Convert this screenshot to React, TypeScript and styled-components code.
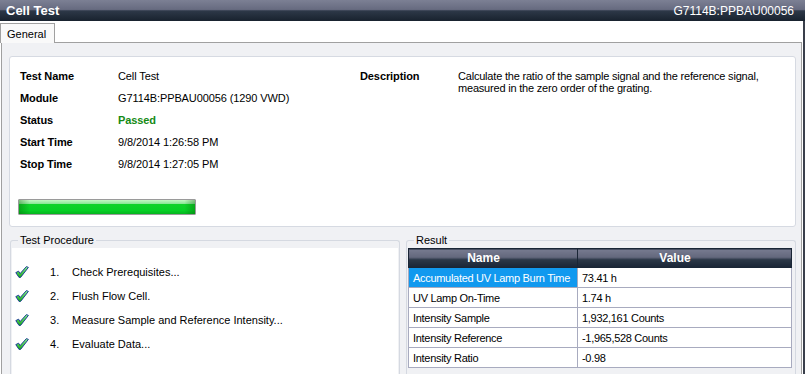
import React from 'react'
import styled, { createGlobalStyle } from 'styled-components'

const GlobalStyle = createGlobalStyle`
  html, body {
    margin: 0;
    padding: 0;
    background: #ffffff;
  }
  body {
    font-family: "Liberation Sans", Arial, sans-serif;
    font-size: 11px;
    color: #000;
  }
`

const Window = styled.div`
  width: 805px;
  height: 374px;
  display: flex;
  flex-direction: column;
  overflow: hidden;
`

const TitleBar = styled.div`
  height: 21px;
  flex: none;
  display: flex;
  align-items: center;
  justify-content: space-between;
  padding: 0 11px 0 6px;
  color: #fff;
  background: linear-gradient(#7c8094 0%, #676b80 45%, #2d3848 52%, #18222e 100%);
`

const Title = styled.span`
  font-size: 13px;
  font-weight: bold;
`

const TitleId = styled.span`
  font-size: 12px;
`

const Body = styled.div`
  flex: 1;
  display: flex;
  flex-direction: column;
  border-right: 2px solid #3a3f4b;
  min-height: 0;
`

const TabStrip = styled.div`
  height: 21px;
  flex: none;
  display: flex;
  align-items: flex-end;
  background: #fff;
`

const Tab = styled.div`
  position: relative;
  z-index: 1;
  height: 20px;
  margin-bottom: -1px;
  padding: 0 8px 0 6px;
  display: flex;
  align-items: center;
  background: #f9f9f9;
  border: 1px solid #a0a0a0;
  border-bottom: none;
  box-sizing: border-box;
  font-size: 11px;
`

const Panel = styled.div`
  flex: 1;
  min-height: 0;
  margin: 0 1px 0 1px;
  padding: 13px 5px 0 7px;
  background: #f0f1f4;
  border: 1px solid #a0a0a0;
  border-bottom: none;
  display: flex;
  flex-direction: column;
`

const InfoCard = styled.div`
  height: 171px;
  flex: none;
  box-sizing: border-box;
  background: #fff;
  border: 1px solid #d6dae2;
  border-radius: 3px;
  padding: 8px 10px 0 10px;
  display: grid;
  grid-template-columns: 340px 1fr;
  letter-spacing: -0.1px;
`

const InfoGrid = styled.div<{ $label: number }>`
  display: grid;
  grid-template-columns: ${p => p.$label}px 1fr;
  grid-auto-rows: 22px;
  align-items: center;
  align-content: start;
`

const Label = styled.div`
  font-weight: bold;
`

const Value = styled.div<{ $status?: boolean }>`
  color: ${p => (p.$status ? '#158a15' : '#000')};
  font-weight: ${p => (p.$status ? 'bold' : 'normal')};
`

const Description = styled.div`
  line-height: 12px;
  align-self: start;
  padding-top: 5px;
  letter-spacing: -0.2px;
`

const Progress = styled.div`
  width: 178px;
  height: 16px;
  margin: 24px 0 0 -2px;
  box-sizing: border-box;
  border: 1px solid #9a9a9a;
  border-radius: 1px;
  background:
    linear-gradient(90deg, rgba(0, 90, 0, 0.35) 0%, rgba(0, 90, 0, 0) 6%, rgba(0, 90, 0, 0) 94%, rgba(0, 90, 0, 0.35) 100%),
    linear-gradient(#c6f7c6 0%, #8ee89a 25%, #0fd22a 32%, #07d026 75%, #06b51f 100%);
`

const BottomRow = styled.div`
  display: grid;
  grid-template-columns: 1fr 1fr;
  gap: 6px;
  margin: 7px 0 0 1px;
  flex: 1;
  min-height: 0;
`

const Group = styled.fieldset`
  margin: 0;
  padding: 0 0 0 1px;
  min-width: 0;
  border: 1px solid #d5d9e1;
  border-bottom: none;
  border-radius: 3px 3px 0 0;
  display: flex;
  flex-direction: column;
`

const Legend = styled.legend`
  margin-left: 6px;
  padding: 0 2px;
  font-size: 11px;
  line-height: 13px;
`

const StepList = styled.ul`
  list-style: none;
  margin: 1px 1px 0 0;
  padding: 12px 0 0 3px;
  background: #fff;
  flex: 1;
`

const Step = styled.li`
  height: 24px;
  display: flex;
  align-items: center;
`

const CheckIcon = styled.svg`
  width: 14px;
  height: 12px;
  margin-right: 21px;
  flex: none;
`

const StepNo = styled.span`
  width: 22px;
  flex: none;
`

const Table = styled.table`
  margin: 1px 2px 0 0;
  border-collapse: collapse;
  table-layout: fixed;
  background: #fff;
  font-size: 11px;
  width: calc(100% - 3px);
`

const HeadCell = styled.th<{ $w?: number }>`
  box-sizing: border-box;
  height: 19px;
  padding: 0 19px 0 0;
  color: #fff;
  font-size: 12px;
  font-weight: bold;
  text-align: center;
  width: ${p => (p.$w ? `${p.$w}px` : 'auto')};
  background: linear-gradient(#777b90 0%, #62677c 45%, #2c3848 55%, #1a2636 100%);
  border: 1px solid #1a2636;
`

const Cell = styled.td<{ $selected?: boolean }>`
  height: 19px;
  padding: 0 0 0 4px;
  white-space: nowrap;
  overflow: hidden;
  letter-spacing: -0.3px;
  border: 1px solid #a8abbf;
  background: ${p => (p.$selected ? '#1199ef' : '#fff')};
  color: ${p => (p.$selected ? '#fff' : '#000')};
`

const Check = () => (
  <CheckIcon viewBox="0 0 14 12">
    <defs>
      <linearGradient id="chk" x1="0" y1="0" x2="0" y2="1">
        <stop offset="0" stopColor="#8cf58c" />
        <stop offset="1" stopColor="#14a814" />
      </linearGradient>
    </defs>
    <polygon
      points="0.8,6.6 3.6,5.2 5.1,7.6 11.4,0.6 13.4,1.4 5.6,11.4 4,11.4"
      fill="url(#chk)"
      stroke="#1f3f98"
      strokeWidth="1"
      strokeLinejoin="round"
    />
  </CheckIcon>
)

const info = [
  { label: 'Test Name', value: 'Cell Test' },
  { label: 'Module', value: 'G7114B:PPBAU00056 (1290 VWD)' },
  { label: 'Status', value: 'Passed', status: true },
  { label: 'Start Time', value: '9/8/2014 1:26:58 PM' },
  { label: 'Stop Time', value: '9/8/2014 1:27:05 PM' },
]

const steps = [
  'Check Prerequisites...',
  'Flush Flow Cell.',
  'Measure Sample and Reference Intensity...',
  'Evaluate Data...',
]

const results = [
  ['Accumulated UV Lamp Burn Time', '73.41 h'],
  ['UV Lamp On-Time', '1.74 h'],
  ['Intensity Sample', '1,932,161 Counts'],
  ['Intensity Reference', '-1,965,528 Counts'],
  ['Intensity Ratio', '-0.98'],
]

export default function App() {
  return (
    <Window>
      <GlobalStyle />
      <TitleBar>
        <Title>Cell Test</Title>
        <TitleId>G7114B:PPBAU00056</TitleId>
      </TitleBar>
      <Body>
        <TabStrip>
          <Tab>General</Tab>
        </TabStrip>
        <Panel>
          <InfoCard>
            <div>
              <InfoGrid $label={98}>
                {info.map(row => (
                  <React.Fragment key={row.label}>
                    <Label>{row.label}</Label>
                    <Value $status={row.status}>{row.value}</Value>
                  </React.Fragment>
                ))}
              </InfoGrid>
              <Progress />
            </div>
            <InfoGrid $label={98}>
              <Label>Description</Label>
              <Description>
                Calculate the ratio of the sample signal and the reference signal, measured in the zero order of the
                grating.
              </Description>
            </InfoGrid>
          </InfoCard>
          <BottomRow>
            <Group>
              <Legend>Test Procedure</Legend>
              <StepList>
                {steps.map((s, i) => (
                  <Step key={s}>
                    <Check />
                    <StepNo>{i + 1}.</StepNo>
                    <span>{s}</span>
                  </Step>
                ))}
              </StepList>
            </Group>
            <Group>
              <Legend>Result</Legend>
              <Table>
                <thead>
                  <tr>
                    <HeadCell $w={169}>Name</HeadCell>
                    <HeadCell>Value</HeadCell>
                  </tr>
                </thead>
                <tbody>
                  {results.map(([name, value], i) => (
                    <tr key={name}>
                      <Cell $selected={i === 0}>{name}</Cell>
                      <Cell>{value}</Cell>
                    </tr>
                  ))}
                </tbody>
              </Table>
            </Group>
          </BottomRow>
        </Panel>
      </Body>
    </Window>
  )
}
